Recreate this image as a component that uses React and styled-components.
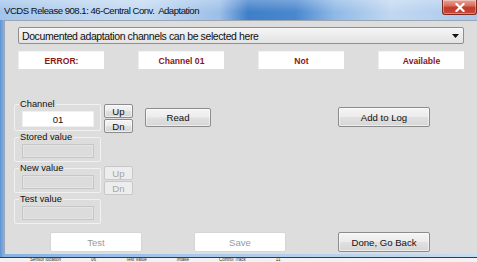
import React from "react";
import styled, { createGlobalStyle } from "styled-components";

const Global = createGlobalStyle`
  html, body { margin: 0; padding: 0; background: #f0f0f0; }
  body { font-family: "Liberation Sans", Arial, sans-serif; }
  * { box-sizing: border-box; }
`;

const Screen = styled.div`
  width: 477px;
  height: 262px;
  overflow: hidden;
  display: flex;
  flex-direction: column;
  background: #ececec;
`;

const Window = styled.div`
  width: 477px;
  height: 257px;
  flex: none;
  display: flex;
  flex-direction: column;
  background: linear-gradient(90deg, #5d93d2 0px, #88b2e2 4px, #a9c8ec 40%, #c8dcf2 100%);
`;

const TitleBar = styled.div`
  height: 20px;
  flex: none;
  display: flex;
  align-items: flex-start;
  background:
    linear-gradient(180deg, rgba(255,255,255,0.25) 0%, rgba(255,255,255,0) 60%),
    linear-gradient(90deg, #a3c4ea 0%, #bcd5f0 18%, #c4daf2 30%, #9cbfe8 46%, #3f7fc9 52%, #4a88ce 62%, #8fb8e6 70%, #c2d8f1 82%, #a9c8ec 100%);
`;

const Title = styled.div`
  flex: 1;
  padding: 5px 0 0 4px;
  font-size: 9.6px;
  letter-spacing: -0.5px;
  line-height: 11px;
  color: #101010;
  white-space: pre;
`;

const CloseBtn = styled.div`
  width: 35px;
  height: 15px;
  margin-left: 1px;
  flex: none;
  display: flex;
  align-items: center;
  justify-content: center;
  border: 1px solid #7c2a22;
  border-top: none;
  border-radius: 0 0 3px 3px;
  background: linear-gradient(180deg, #e8a397 0%, #d8705f 40%, #c2382a 55%, #c94a38 100%);
  box-shadow: inset 0 0 0 1px rgba(255,255,255,0.35);
`;

const Body = styled.div`
  height: 234px;
  margin-left: 4px;
  flex: none;
  display: flex;
  flex-direction: column;
  padding: 7px 0 2px 9px;
  background: #dddddd;
  border-top: 1px solid #9aa6b4;
  border-left: 1px solid #9aa6b4;
`;

const Select = styled.div`
  width: 446px;
  height: 17px;
  margin-left: 4px;
  margin-top: -1px;
  flex: none;
  display: flex;
  align-items: center;
  padding: 0 4px 0 3px;
  border: 1px solid #8f8f8f;
  border-radius: 2px;
  background: linear-gradient(180deg, #f6f6f6 0%, #ececec 50%, #e2e2e2 100%);
  font-size: 10.5px;
  letter-spacing: -0.4px;
  color: #111;
`;

const SelectText = styled.span`
  flex: 1;
  white-space: nowrap;
`;

const StatusRow = styled.div`
  width: 446px;
  height: 18px;
  margin: 7px 0 0 4px;
  flex: none;
  display: grid;
  grid-template-columns: repeat(4, 86px);
  justify-content: space-between;
`;

const StatusBox = styled.div`
  display: flex;
  align-items: center;
  justify-content: center;
  background: #ffffff;
  border-left: 1px solid #eeeeee;
  border-top: 1px solid #f4f4f4;
  font-size: 8.6px;
  font-weight: bold;
  color: #8a1616;
`;

const Middle = styled.div`
  margin-top: 29px;
  display: flex;
  flex-direction: column;
`;

const Row = styled.div`
  height: ${(p) => p.$h}px;
  display: flex;
  align-items: flex-start;
`;

const Group = styled.fieldset`
  width: 87px;
  margin: 0;
  padding: 0 6px ${(p) => p.$pb}px 7px;
  border: 1px solid #f1f1f1;
  border-radius: 2px;
  flex: none;
`;

const Legend = styled.legend`
  padding: 0 1px;
  margin-left: -3px;
  font-size: 9.3px;
  line-height: 13px;
  color: #111;
`;

const ValueField = styled.div`
  width: 72px;
  height: 16px;
  display: flex;
  align-items: center;
  justify-content: center;
  background: #ffffff;
  border: 1px solid #f0f0f0;
  font-size: 9.6px;
  color: #111;
`;

const EmptyField = styled.div`
  width: 72px;
  height: 14px;
  background: #dcdcdc;
  border: 1px solid #c6c6c6;
  box-shadow: inset 0 0 0 1px #e4e4e4;
`;

const SpinCol = styled.div`
  margin: ${(p) => p.$mt}px 0 0 3px;
  display: flex;
  flex-direction: column;
  gap: 1px;
  flex: none;
`;

const Button = styled.div`
  width: ${(p) => p.$w}px;
  height: ${(p) => p.$h}px;
  margin: ${(p) => p.$m || "0"};
  flex: none;
  display: flex;
  align-items: center;
  justify-content: center;
  border: 1px solid #8c8c8c;
  border-radius: 2px;
  background: linear-gradient(180deg, #f4f4f4 0%, #ececec 48%, #e0e0e0 52%, #d6d6d6 100%);
  box-shadow: inset 0 0 0 1px rgba(255,255,255,0.55);
  font-size: ${(p) => p.$fs || 9.6}px;
  color: #111;
  white-space: nowrap;
`;

const DisabledButton = styled(Button)`
  border-color: #c8c8c8;
  background: #ededed;
  box-shadow: none;
  color: #a6a6a6;
`;

const FlatButton = styled(Button)`
  border-color: #d6d6d6;
  background: #ffffff;
  box-shadow: none;
  color: #9a9a9a;
`;

const ButtonRow = styled.div`
  margin: 8px 0 0 36px;
  display: flex;
  gap: 52px;
`;

const Backdrop = styled.div`
  height: 5px;
  flex: none;
  overflow: hidden;
  display: flex;
  align-items: flex-start;
  gap: 30px;
  padding-left: 30px;
  background: #f2f2f2;
  border-top: 1px solid #3a3a3a;
  font-size: 4.5px;
  line-height: 4px;
  color: #333;
  white-space: nowrap;
`;

function CloseX() {
  return (
    <svg width="10" height="9" viewBox="0 0 10 9">
      <path d="M1.5 1 L8.5 8 M8.5 1 L1.5 8" stroke="#ffffff" strokeWidth="2.2" strokeLinecap="square" />
    </svg>
  );
}

function Caret() {
  return (
    <svg width="7" height="4" viewBox="0 0 7 4">
      <path d="M0 0 H7 L3.5 4 Z" fill="#111" />
    </svg>
  );
}

export default function App() {
  return (
    <>
      <Global />
      <Screen>
        <Window>
          <TitleBar>
            <Title>VCDS Release 908.1: 46-Central Conv.  Adaptation</Title>
            <CloseBtn>
              <CloseX />
            </CloseBtn>
          </TitleBar>
          <Body>
            <Select>
              <SelectText>Documented adaptation channels can be selected here</SelectText>
              <Caret />
            </Select>
            <StatusRow>
              <StatusBox>ERROR:</StatusBox>
              <StatusBox>Channel 01</StatusBox>
              <StatusBox>Not</StatusBox>
              <StatusBox>Available</StatusBox>
            </StatusRow>
            <Middle>
              <Row $h={33}>
                <Group $pb={3}>
                  <Legend>Channel</Legend>
                  <ValueField>01</ValueField>
                </Group>
                <SpinCol $mt={6}>
                  <Button $w={29} $h={14}>Up</Button>
                  <Button $w={29} $h={14}>Dn</Button>
                </SpinCol>
                <Button $w={66} $h={19} $m="10px 0 0 12px">Read</Button>
                <Button $w={92} $h={20} $m="9px 0 0 127px">Add to Log</Button>
              </Row>
              <Row $h={31}>
                <Group $pb={3}>
                  <Legend>Stored value</Legend>
                  <EmptyField />
                </Group>
              </Row>
              <Row $h={31}>
                <Group $pb={3}>
                  <Legend>New value</Legend>
                  <EmptyField />
                </Group>
                <SpinCol $mt={4}>
                  <DisabledButton $w={29} $h={14}>Up</DisabledButton>
                  <DisabledButton $w={29} $h={14}>Dn</DisabledButton>
                </SpinCol>
              </Row>
              <Row $h={31}>
                <Group $pb={3}>
                  <Legend>Test value</Legend>
                  <EmptyField />
                </Group>
              </Row>
            </Middle>
            <ButtonRow>
              <FlatButton $w={92} $h={20}>Test</FlatButton>
              <FlatButton $w={92} $h={20}>Save</FlatButton>
              <Button $w={92} $h={20}>Done, Go Back</Button>
            </ButtonRow>
          </Body>
        </Window>
        <Backdrop>
          <span>Sensor location</span>
          <span>06</span>
          <span>Test Value</span>
          <span>Intake</span>
          <span>Control Track</span>
          <span>11</span>
        </Backdrop>
      </Screen>
    </>
  );
}
